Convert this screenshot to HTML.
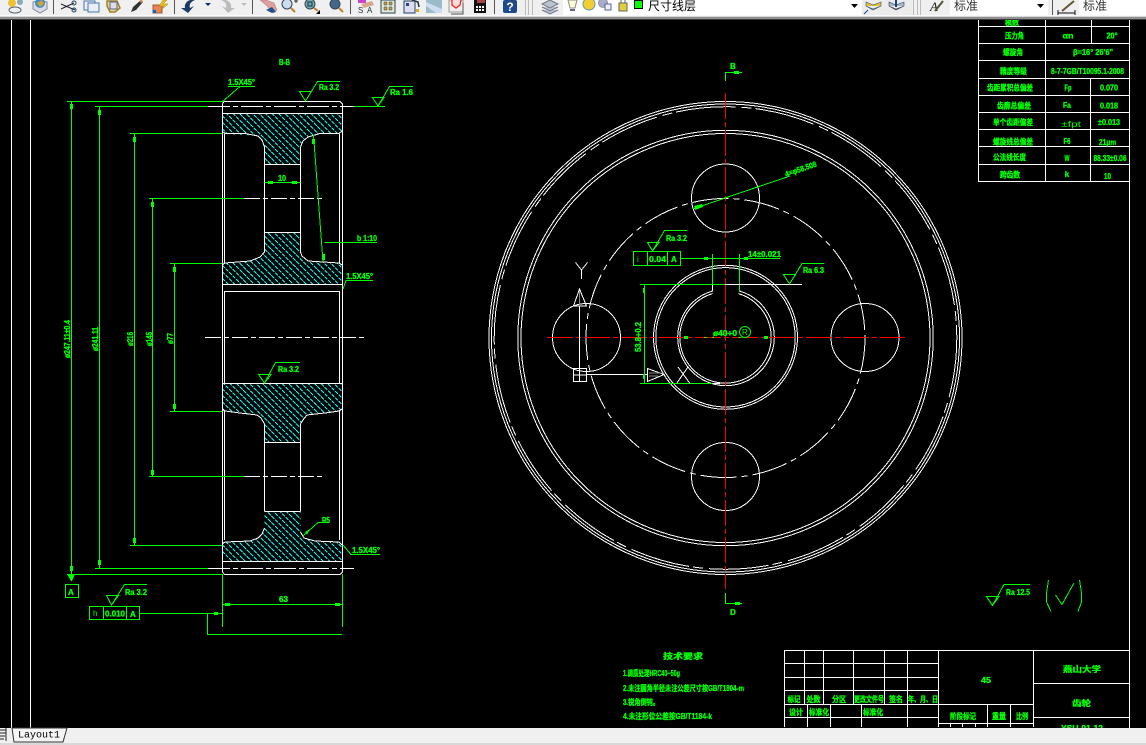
<!DOCTYPE html>
<html lang="zh"><head><meta charset="utf-8"><title>CAD</title>
<style>
html,body{margin:0;padding:0;background:#000;width:1146px;height:745px;overflow:hidden}
svg{display:block;position:absolute;left:0;top:0}
.c *{shape-rendering:crispEdges;fill:none;stroke-width:1}
.g{stroke:#0f0}.w{stroke:#fff}.r{stroke:#f00}
text{font-family:"Liberation Sans","Noto Sans CJK SC",sans-serif;fill:#0f0;font-weight:bold;font-size:8px;stroke:#0f0;stroke-width:.35}
.m{text-anchor:middle}
.f{fill:#0f0;stroke:none}
.n{stroke:none;font-weight:normal}
</style></head><body>
<svg width="1146" height="745" viewBox="0 0 1146 745" xmlns="http://www.w3.org/2000/svg">
<defs>
<clipPath id="hc">
<path d="M222 113H342V131L339 134H320L308 137L303 141L300.5 147V164H264.5V147L262 140L258 136L245 135L225 134L222 131Z"/>
<path d="M264.5 232.5H300.5V252L302 256L308 261L339 263L342 265V284H222V265L225 263L250 261L260 257L264.5 252Z"/>
<path d="M222 383.5H342V409L339 411L325 413L307 415L303 420L300.5 424V442.5H264.5V424L261 418L257 415L240 413L225 411L222 409Z"/>
<path d="M264.5 511.5H300.5V532L304 538L315 541L339 542L342 545V561H222V544L225 542L250 541L258 538L262 534L264.5 528Z"/>
</clipPath>
</defs>
<rect width="1146" height="745" fill="#000"/>

<!-- hatching -->
<g clip-path="url(#hc)">
<path fill="none" stroke="#0ff" stroke-width="1" stroke-dasharray="4 1" shape-rendering="crispEdges" d="M222 -8l120 120m-120-113.5l120 120m-120-113.5l120 120m-120-113.5l120 120m-120-113.5l120 120m-120-113.5l120 120m-120-113.5l120 120m-120-113.5l120 120m-120-113.5l120 120m-120-113.5l120 120m-120-113.5l120 120m-120-113.5l120 120m-120-113.5l120 120m-120-113.5l120 120m-120-113.5l120 120m-120-113.5l120 120m-120-113.5l120 120m-120-113.5l120 120m-120-113.5l120 120m-120-113.5l120 120m-120-113.5l120 120m-120-113.5l120 120m-120-113.5l120 120m-120-113.5l120 120m-120-113.5l120 120m-120-113.5l120 120m-120-113.5l120 120m-120-113.5l120 120m-120-113.5l120 120m-120-113.5l120 120m-120-113.5l120 120m-120-113.5l120 120m-120-113.5l120 120m-120-113.5l120 120m-120-113.5l120 120m-120-113.5l120 120m-120-113.5l120 120m-120-113.5l120 120m-120-113.5l120 120m-120-113.5l120 120m-120-113.5l120 120m-120-113.5l120 120m-120-113.5l120 120m-120-113.5l120 120m-120-113.5l120 120m-120-113.5l120 120m-120-113.5l120 120m-120-113.5l120 120m-120-113.5l120 120m-120-113.5l120 120m-120-113.5l120 120m-120-113.5l120 120m-120-113.5l120 120m-120-113.5l120 120m-120-113.5l120 120m-120-113.5l120 120m-120-113.5l120 120m-120-113.5l120 120m-120-113.5l120 120m-120-113.5l120 120m-120-113.5l120 120m-120-113.5l120 120m-120-113.5l120 120m-120-113.5l120 120m-120-113.5l120 120m-120-113.5l120 120m-120-113.5l120 120m-120-113.5l120 120m-120-113.5l120 120m-120-113.5l120 120m-120-113.5l120 120m-120-113.5l120 120m-120-113.5l120 120m-120-113.5l120 120m-120-113.5l120 120m-120-113.5l120 120m-120-113.5l120 120m-120-113.5l120 120m-120-113.5l120 120m-120-113.5l120 120m-120-113.5l120 120m-120-113.5l120 120m-120-113.5l120 120m-120-113.5l120 120m-120-113.5l120 120m-120-113.5l120 120m-120-113.5l120 120"/>
</g>

<g class="c">
<!-- frame -->
<path class="w" d="M11.5 20V728M30.5 20V728M1129.5 20V728"/>

<!-- left view white -->
<path class="w" d="M222.5 104L224 101.5H340L342.5 104V572L340 574.5H224.5L222.5 572ZM224.5 134V263M339.5 134V263M224.5 291V383M339.5 291V383M224.5 411V540M339.5 411V540"/>
<path class="w" d="M222 113.5H342M222 284.5H342M224.5 291.5H339.5M222 383.5H342M222 561.5H342"/>
<path class="w" d="M222 131L225 133.5H245L258 136L262 140L264.5 147V232.5M342 131L339 133.5H320L308 137L303 141L300.5 147V232.5M264.5 164.5H300.5M264.5 232.5H300.5"/>
<path class="w" d="M264.5 232V252L260 257L250 261L225 263L222 265M300.5 232V252L302 256L308 261L339 263L342 265"/>
<path class="w" d="M222 409L225 411L240 413L257 415L261 418L264.5 424V511.5M342 409L339 411L325 413L307 415L303 420L300.5 424V511.5M264.5 442.5H300.5M264.5 511.5H300.5"/>
<path class="w" d="M264.5 528L262 534L258 538L250 541L225 542L222 544M300.5 532L304 538L315 541L339 542L342 545"/>
<path class="w" stroke-dasharray="22 3 5 3" d="M208 106.5H354M208 568.5H354"/>
<path class="w" stroke-dasharray="16 3 5 3" d="M244 198.5H322M244 476.5H322M205 337.5H366"/>

<!-- left dims -->
<path class="g" d="M71.5 101.5V580M99.5 106.5V568M134.5 133.5V545M152.5 198.5V476M174.5 263.5V411"/>
<path class="g" d="M67 101.5H222M95 106.5H208M130 133.5H222M149 198.5H244M170 263.5H222M170 411.5H222M130 545.5H222M149 476.5H244M95 568.5H208M67 574.5H222"/>
<path class="g" d="M264.5 182.5H300.5M222.5 574V627M342.5 574V627M222 604.5H342M140 613.5H222M207.5 613V634.5H342"/>
<path class="g" d="M313.5 135L323 262M324.5 242.5H377M354 106.5H385"/>
<path class="g" d="M222 102L240 86.5H255M228 86.5H240M343 289L346 280.5H373M343 545L351 554.5H380"/>
<path class="g" d="M303 536L318 522.5H329"/>
<path class="g" d="M299.5 91.5H311.5L305.5 101L299.5 91.5ZM305.5 101L317.5 81.5H340"/>
<path class="g" d="M372.5 97.5H384L378 106L372.5 97.5ZM378 106L389.5 86.5H413"/>
<path class="g" d="M258.5 374.5H271L264.5 383L258.5 374.5ZM264.5 383L275.5 362.5H300"/>
<path class="g" d="M106.5 595.5H118.5L111.5 605L106.5 595.5ZM111.5 605L124.5 584.5H147"/>
<path class="g" d="M65.5 584.5H78.5V597.5H65.5ZM89.5 606.5H139.5V619.5H89.5ZM103.5 606V620M126.5 606V620"/>
</g>
<g class="f">
<rect x="70" y="104" width="3" height="5"/><rect x="98" y="110" width="3" height="5"/><rect x="133" y="137" width="3" height="5"/><rect x="151" y="202" width="3" height="5"/><rect x="173" y="267" width="3" height="5"/>
<rect x="70" y="566" width="3" height="5"/><rect x="98" y="560" width="3" height="5"/><rect x="133" y="538" width="3" height="5"/><rect x="151" y="470" width="3" height="5"/><rect x="173" y="404" width="3" height="5"/>
<rect x="268" y="181" width="5" height="3"/><rect x="292" y="181" width="5" height="3"/>
<rect x="312" y="139" width="3" height="5"/><rect x="322" y="254" width="3" height="6"/>
<rect x="225" y="603" width="5" height="3"/><rect x="335" y="603" width="5" height="3"/><rect x="214" y="612" width="4" height="3"/>
<path d="M67 574H75L72 581H71ZM305 532L310 529L307 535Z"/>
</g>

<!-- left text -->
<text x="228" y="85" font-size="9" textLength="27" lengthAdjust="spacingAndGlyphs">1.5X45°</text>
<text x="279" y="65" textLength="11" lengthAdjust="spacingAndGlyphs">B-B</text>
<text x="319" y="90" font-size="9" textLength="20" lengthAdjust="spacingAndGlyphs">Ra 3.2</text>
<text x="390" y="95" font-size="9" textLength="23" lengthAdjust="spacingAndGlyphs">Ra 1.6</text>
<text x="278" y="181" font-size="9" textLength="8" lengthAdjust="spacingAndGlyphs">10</text>
<text x="357" y="241" font-size="9" textLength="20" lengthAdjust="spacingAndGlyphs">b 1:10</text>
<text x="346" y="279" font-size="9" textLength="27" lengthAdjust="spacingAndGlyphs">1.5X45°</text>
<text x="278" y="372" font-size="9" textLength="21" lengthAdjust="spacingAndGlyphs">Ra 3.2</text>
<text x="322" y="523" font-size="9" textLength="8" lengthAdjust="spacingAndGlyphs">R5</text>
<text x="352" y="553" font-size="9" textLength="28" lengthAdjust="spacingAndGlyphs">1.5X45°</text>
<text x="125" y="595" font-size="9" textLength="22" lengthAdjust="spacingAndGlyphs">Ra 3.2</text>
<text x="279" y="602" font-size="9" textLength="9" lengthAdjust="spacingAndGlyphs">63</text>
<text x="68" y="595" font-size="9">A</text>
<text x="93" y="616" class="n">h</text>
<text x="105" y="616.5" font-size="9" textLength="20" lengthAdjust="spacingAndGlyphs">0.010</text>
<text x="130" y="617" font-size="9">A</text>
<text transform="translate(70 358) rotate(-90)" font-size="9" textLength="38" lengthAdjust="spacingAndGlyphs">ø247.11±0.4</text>
<text transform="translate(98 351) rotate(-90)" font-size="9" textLength="24" lengthAdjust="spacingAndGlyphs">ø241.11</text>
<text transform="translate(133 346) rotate(-90)" font-size="9" textLength="14" lengthAdjust="spacingAndGlyphs">ø216</text>
<text transform="translate(152 346) rotate(-90)" font-size="9" textLength="14" lengthAdjust="spacingAndGlyphs">ø145</text>
<text transform="translate(173 344) rotate(-90)" font-size="9" textLength="11" lengthAdjust="spacingAndGlyphs">ø77</text>

<!-- right view -->
<g class="c">
<circle class="w" cx="725.5" cy="338" r="236.5"/>
<circle class="w" cx="725.5" cy="338" r="234"/>
<circle class="w" cx="725.5" cy="338" r="231.3" stroke-dasharray="60 6 10 4"/>
<circle class="w" cx="725.5" cy="338" r="207.7"/>
<circle class="w" cx="725.5" cy="338" r="204.5"/>
<circle class="w" cx="725.5" cy="338" r="139.5" stroke-dasharray="36 5 6 5"/>
<circle class="w" cx="725.5" cy="198" r="34"/>
<circle class="w" cx="725.5" cy="476.5" r="34"/>
<circle class="w" cx="586.5" cy="337.5" r="34"/>
<circle class="w" cx="865" cy="337.5" r="34"/>
<circle class="w" cx="725.5" cy="337.3" r="72"/>
<circle class="w" cx="725.5" cy="337.3" r="69.7"/>
<path class="w" d="M712.5 284V291A48.3 48.3 0 1 0 739.5 291V284"/>
<path class="w" d="M712.5 293.6A45.7 45.7 0 1 0 738.5 293.6"/>
<path class="r" stroke-dasharray="26 3 5 3" d="M725.5 93V589"/>
<path class="r" stroke-dasharray="26 3 5 3" d="M547 337.5H905"/>
<!-- section marks -->
<path class="g" d="M725.5 81V72.5H742M725.5 593V603.5H742"/>
<!-- dia -->
<path class="g" d="M694 208.5L790 176"/>
<path class="g" d="M633.5 251.5H680.5V265.5H633.5ZM647.5 251V266M667.5 251V266M680.5 258.5H780M712.5 254V284M739.5 254V292"/>
<path class="g" d="M647.5 242.5H659L652.5 251L647.5 242.5ZM652.5 251L664.5 230.5H687"/>
<path class="w" d="M725 284.5H802"/>
<path class="g" d="M640 284.5H725M644.5 284V383M640 383.5H712"/>
<path class="w" d="M712 383.5H720"/>
<path class="g" d="M783.5 274.5H795.5L789.5 284L783.5 274.5ZM789.5 284L802 263.5H824"/>
<!-- section symbol -->
<path class="w" d="M573.5 368.5H586.5V381.5H573.5ZM579.5 306V382M573 375H587M586.5 374.5H647M573.5 306H586.5L579.5 289ZM647.5 368.5V381.5L664 374.5Z"/>
<path class="w" d="M575.5 262.5L581.5 270L587.5 262.5M581.5 270V279M688 367L676.5 383.5M678 367L690 383.5"/>
<path d="M579.5 291V305M649 373H663M649 376H658" style="stroke:#888"/>
<!-- marks -->
<path class="g" d="M986.5 596.5H999L992.5 605.5L986.5 596.5ZM992.5 605.5L1004 584.5H1030"/>
<path class="g" d="M1048.5 580L1046.5 593V602L1051 611.5M1079.5 580L1081.5 593V602L1078 611.5M1055.5 595L1062 604.5L1074 583"/>

<!-- table top right -->
<path class="w" d="M978.5 20V181.5H1129.5M978.5 26.5H1129.5M978.5 43.5H1129.5M978.5 60.5H1129.5M978.5 78.5H1129.5M978.5 95.5H1129.5M978.5 112.5H1129.5M978.5 129.5H1129.5M978.5 146.5H1129.5M978.5 164.5H1129.5"/>
<path class="w" d="M1045.5 20V181.5M1091.5 20V43M1090.5 78V181.5"/>

<!-- title block -->
<path class="w" d="M784.5 650.5H1129.5M784.5 663.5H938.5M784.5 677.5H938.5M784.5 690.5H938.5M784.5 704.5H1033.5M784.5 717.5H938.5M938.5 723.5H1033.5M1033.5 683.5H1129.5M1033.5 717.5H1129.5"/>
<path class="w" d="M784.5 650V727M804.5 650V704M823.5 650V704M853.5 650V704M884.5 650V704M907.5 650V727M938.5 650V727M1033.5 650V727M807.5 704V727M830.5 704V727M861.5 704V727M987.5 704V727M1010.5 704V727M950.5 723V727M962.5 723V727M975.5 723V727"/>
</g>
<g class="f">
<rect x="734" y="71" width="5" height="3"/><rect x="735" y="602" width="5" height="3"/>
<rect x="704" y="257" width="4" height="3"/><rect x="744" y="257" width="4" height="3"/>
<rect x="643" y="288" width="2" height="5"/><rect x="643" y="374" width="2" height="5"/>
<rect x="684" y="336" width="4" height="3"/><rect x="764" y="336" width="4" height="3"/>
<rect x="704" y="337" width="3" height="1"/><rect x="712" y="337" width="2" height="1"/><rect x="738" y="337" width="3" height="1"/>
<path d="M694 206L702 204L703 207L695 210Z"/>
</g>
<text x="730" y="69" font-size="9">B</text>
<text x="730" y="615" font-size="9">D</text>
<text transform="translate(786 177) rotate(-19)" font-size="9" textLength="33" lengthAdjust="spacingAndGlyphs">4×φ58.508</text>
<text x="666" y="241" font-size="9" textLength="21" lengthAdjust="spacingAndGlyphs">Ra 3.2</text>
<text x="637" y="262" class="n">i</text>
<text x="649" y="262" font-size="9" textLength="17" lengthAdjust="spacingAndGlyphs">0.04</text>
<text x="671" y="262">A</text>
<text x="748" y="257" font-size="9" textLength="33" lengthAdjust="spacingAndGlyphs">14±0.021</text>
<text x="803" y="273" font-size="9" textLength="21" lengthAdjust="spacingAndGlyphs">Ra 6.3</text>
<text x="713" y="336" font-size="9" textLength="24" lengthAdjust="spacingAndGlyphs">ø40+0</text>
<circle cx="745" cy="332" r="5.5" fill="none" stroke="#0f0"/>
<text x="742" y="335" font-size="7" class="n">R</text>
<text transform="translate(641 352) rotate(-90)" font-size="9" textLength="30" lengthAdjust="spacingAndGlyphs">53.8+0.2</text>
<text x="1006" y="595" font-size="10" textLength="24" lengthAdjust="spacingAndGlyphs">Ra 12.5</text>

<!-- tech text -->
<text x="663" y="659" font-size="13" textLength="40" lengthAdjust="spacingAndGlyphs">技术要求</text>
<text x="623" y="676" font-size="9" textLength="57" lengthAdjust="spacingAndGlyphs">1.调质处理HRC40~50g</text>
<text x="623" y="691" font-size="9" textLength="121" lengthAdjust="spacingAndGlyphs">2.未注圆角半径未注公差尺寸按GB/T1804-m</text>
<text x="623" y="705" font-size="9" textLength="36" lengthAdjust="spacingAndGlyphs">3.锐角倒钝。</text>
<text x="623" y="719" font-size="9" textLength="89" lengthAdjust="spacingAndGlyphs">4.未注形位公差按GB/T1184-k</text>

<!-- title text -->
<g font-size="10">
<text x="794" y="702" class="m" textLength="13" lengthAdjust="spacingAndGlyphs">标记</text>
<text x="813.5" y="702" class="m" textLength="14" lengthAdjust="spacingAndGlyphs">处数</text>
<text x="839" y="702" class="m" textLength="14" lengthAdjust="spacingAndGlyphs">分区</text>
<text x="869" y="702" class="m" textLength="30" lengthAdjust="spacingAndGlyphs">更改文件号</text>
<text x="896" y="702" class="m" textLength="14" lengthAdjust="spacingAndGlyphs">签名</text>
<text x="923" y="702" class="m" textLength="30" lengthAdjust="spacingAndGlyphs">年、月、日</text>
<text x="796" y="715" class="m" textLength="14" lengthAdjust="spacingAndGlyphs">设计</text>
<text x="819" y="715" class="m" textLength="20" lengthAdjust="spacingAndGlyphs">标准化</text>
<text x="873" y="715" class="m" textLength="20" lengthAdjust="spacingAndGlyphs">标准化</text>
<text x="963" y="719" class="m" textLength="26" lengthAdjust="spacingAndGlyphs">阶段标记</text>
<text x="999" y="719" class="m" textLength="14" lengthAdjust="spacingAndGlyphs">重量</text>
<text x="1022" y="719" class="m" textLength="12" lengthAdjust="spacingAndGlyphs">比例</text>
</g>
<text x="986" y="683" class="m" font-size="13" textLength="10" lengthAdjust="spacingAndGlyphs">45</text>
<text x="1082" y="672" class="m" font-size="13" textLength="38" lengthAdjust="spacingAndGlyphs">燕山大学</text>
<text x="1081.5" y="706" class="m" font-size="13" textLength="19" lengthAdjust="spacingAndGlyphs">齿轮</text>
<text x="1082" y="731" class="m" font-size="8" textLength="42" lengthAdjust="spacingAndGlyphs">YSU-01-12</text>

<!-- table text -->
<g font-size="9">
<text x="1012" y="25" class="m" textLength="14" lengthAdjust="spacingAndGlyphs">模数</text>
<text x="1014.5" y="38.5" class="m" textLength="19" lengthAdjust="spacingAndGlyphs">压力角</text>
<text x="1068" y="38.5" class="m" textLength="11" lengthAdjust="spacingAndGlyphs">αn</text>
<text x="1112" y="38.5" class="m" textLength="11" lengthAdjust="spacingAndGlyphs">20°</text>
<text x="1013" y="55" class="m" textLength="20" lengthAdjust="spacingAndGlyphs">螺旋角</text>
<text x="1093" y="55" class="m" textLength="40" lengthAdjust="spacingAndGlyphs">β=16° 26'6"</text>
<text x="1013.5" y="74" class="m" textLength="27" lengthAdjust="spacingAndGlyphs">精度等级</text>
<text x="1087.5" y="74" class="m" textLength="73" lengthAdjust="spacingAndGlyphs">8-7-7GB/T10095.1-2008</text>
<text x="1010" y="90.5" class="m" textLength="46" lengthAdjust="spacingAndGlyphs">齿距累积总偏差</text>
<text x="1068" y="90.5" class="m" textLength="7" lengthAdjust="spacingAndGlyphs">Fp</text>
<text x="1109" y="90.5" class="m" textLength="18" lengthAdjust="spacingAndGlyphs">0.070</text>
<text x="1014" y="108.5" class="m" textLength="34" lengthAdjust="spacingAndGlyphs">齿廓总偏差</text>
<text x="1067" y="108" class="m" textLength="8" lengthAdjust="spacingAndGlyphs">Fa</text>
<text x="1109" y="108.5" class="m" textLength="18" lengthAdjust="spacingAndGlyphs">0.018</text>
<text x="1013" y="125" class="m" textLength="40" lengthAdjust="spacingAndGlyphs">单个齿距偏差</text>
<text x="1071" y="127" class="m n" font-size="13" textLength="20" lengthAdjust="spacingAndGlyphs">±fpt</text>
<text x="1109" y="125" class="m" textLength="22" lengthAdjust="spacingAndGlyphs">±0.013</text>
<text x="1013" y="144.5" class="m" textLength="40" lengthAdjust="spacingAndGlyphs">螺旋线总偏差</text>
<text x="1067" y="144" class="m" textLength="7" lengthAdjust="spacingAndGlyphs">F6</text>
<text x="1107.5" y="145" class="m" textLength="17" lengthAdjust="spacingAndGlyphs">21μm</text>
<text x="1009.5" y="160" class="m" textLength="33" lengthAdjust="spacingAndGlyphs">公法线长度</text>
<text x="1067" y="161" class="m" textLength="5" lengthAdjust="spacingAndGlyphs">W</text>
<text x="1110" y="161" class="m" textLength="33" lengthAdjust="spacingAndGlyphs">88.33±0.06</text>
<text x="1010" y="177.5" class="m" textLength="20" lengthAdjust="spacingAndGlyphs">跨齿数</text>
<text x="1067" y="177" class="m">k</text>
<text x="1107.5" y="179" class="m" textLength="7" lengthAdjust="spacingAndGlyphs">10</text>
</g>

<!-- toolbar -->
<rect x="0" y="0" width="1146" height="16" fill="#f0f0f0"/>
<rect x="0" y="15" width="1146" height="1" fill="#fafafa"/>
<rect x="0" y="16" width="1146" height="1" fill="#d8d8d8"/>
<rect x="0" y="17" width="1146" height="2" fill="#909090"/>
<rect x="0" y="19" width="1146" height="1" fill="#3a3a3a"/>
<rect x="0" y="728" width="1146" height="17" fill="#f0f0f0"/>
<rect x="0" y="743" width="1146" height="2" fill="#d8d8d8"/>

<!-- status tab -->
<path d="M12 728L14 742H63L67 728Z" fill="#f5f5f5" stroke="#333" stroke-width="1"/>
<path d="M0 730H6M0 733H6M0 736H5M0 739H4" stroke="#222"/>
<path d="M6 728V741" stroke="#222"/>
<text x="18" y="737.5" class="n" style="font-family:'Liberation Mono',monospace;fill:#000;font-size:10px">Layout1</text>

<!-- separators -->
<path d="M53.5 0V14M174.5 0V14M252.5 0V14M350.5 0V14M494.5 0V14M1052.5 0V15" stroke="#555"/>
<path d="M525.5 0V15M528.5 0V15M532.5 0V15M913.5 0V15M917.5 0V15M920.5 0V15" stroke="#bbb"/>

<!-- combo backgrounds -->
<rect x="563" y="0" width="299" height="15" fill="#fff"/>
<rect x="950" y="0" width="98" height="15" fill="#fff"/>
<rect x="1079" y="0" width="67" height="15" fill="#fff"/>
<rect x="862" y="0" width="50" height="15" fill="#ececec"/>

<!-- icons -->
<circle cx="12" cy="3" r="4" fill="#f0c030"/><ellipse cx="15" cy="10" rx="6" ry="3" fill="none" stroke="#567"/><circle cx="20" cy="2" r="3" fill="#8ab"/>
<path d="M33 2L40 0L47 2V9L40 13L33 9Z" fill="#d8dde8" stroke="#889"/><circle cx="40" cy="3" r="5" fill="#3a8fc8"/><path d="M37 3L42 0L44 4L40 7Z" fill="#d8a030"/>
<path d="M61 4L75 10M61 9L74 3" stroke="#223" stroke-width="1"/><circle cx="74" cy="3" r="2" fill="none" stroke="#246"/><circle cx="74" cy="10" r="2" fill="none" stroke="#246"/>
<rect x="84" y="1" width="11" height="9" fill="#eef" stroke="#4878a8"/><rect x="88" y="3" width="11" height="9" fill="#e8eff8" stroke="#4878a8"/>
<path d="M107 1H117L120 8L115 12H110L107 6Z" fill="#e8d8a0" stroke="#a08030" stroke-width="1.5"/><rect x="110" y="2" width="7" height="7" fill="#dde" stroke="#567"/>
<path d="M131 12L133 7L141 0L143 2L136 10Z" fill="#333"/><path d="M139 1L142 0L143 2L141 3Z" fill="#c84"/>
<rect x="153" y="5" width="9" height="8" fill="#f08050" stroke="#906040"/><rect x="153" y="10" width="3" height="3" fill="#06c"/><path d="M163 0L159 6H164L160 11L168 4H163L167 0Z" fill="#f0c020" stroke="#a08010" stroke-width=".5"/>
<path d="M195 0C190 2 189 5 190 8L194 6L188 13L181 8L185 8C184 4 187 1 190 0Z" fill="#1a3a6a"/>
<path d="M205 3H211L208 6Z" fill="#003080"/>
<path d="M221 0C226 2 227 5 226 8L222 6L228 13L235 8L231 8C232 4 229 1 226 0Z" fill="#bbb"/>
<path d="M241 3H247L244 6Z" fill="#bbb"/>
<path d="M260 0L267 6L272 12L277 10L274 3L266 0Z" fill="#e0a0a0" stroke="#a07070" stroke-width=".5"/><path d="M266 10L272 7L276 12L272 13Z" fill="#24508c"/>
<circle cx="287" cy="4" r="5" fill="#cde" stroke="#345"/><path d="M291 8L295 12" stroke="#c08030" stroke-width="2"/><path d="M294 1H298M296 0V3" stroke="#333"/>
<circle cx="310" cy="4" r="5" fill="#7aa" stroke="#345"/><rect x="308" y="2" width="4" height="4" fill="none" stroke="#135"/><path d="M314 8L318 11" stroke="#c08030" stroke-width="2"/><path d="M320 10V14H316Z" fill="#000"/>
<circle cx="335" cy="4" r="5" fill="#468" stroke="#345"/><path d="M339 8L343 12" stroke="#c08030" stroke-width="2"/>
<rect x="358" y="0" width="8" height="3" fill="#c4c"/><path d="M361 4L372 1L374 5L364 8Z" fill="#d8a888"/><text x="358" y="13" class="n" style="fill:#234;font-size:8px">S</text><text x="367" y="13" class="n" style="fill:#234;font-size:8px">A</text>
<rect x="381" y="0" width="14" height="13" fill="#e8e8d8" stroke="#245"/><path d="M384 2h3v3h-3zM389 2h3v3h-3zM384 7h3v3h-3zM389 7h3v3h-3z" fill="#c8a030" stroke="#246" stroke-width=".5"/>
<rect x="404" y="1" width="11" height="12" fill="#dde" stroke="#246"/><path d="M412 0L418 2L419 7" stroke="#234" fill="none" stroke-width="1.5"/><rect x="416" y="9" width="3" height="3" fill="#da2"/><rect x="406" y="3" width="3" height="3" fill="#248"/>
<rect x="426" y="0" width="16" height="13" fill="#9bc"/><path d="M426 2L442 9V13H436L426 6Z" fill="#cde"/>
<rect x="449" y="0" width="14" height="12" fill="#eee" stroke="#999"/><path d="M452 0V5L456 8L460 5L461 0" fill="#fdd" stroke="#e22" stroke-width="1.3"/><path d="M463 3V14H451" stroke="#555" fill="none"/>
<rect x="474" y="0" width="12" height="13" fill="#111"/><path d="M476 6h2v2h-2zM479 6h2v2h-2zM482 6h2v2h-2zM476 9h2v2h-2zM479 9h2v2h-2zM482 9h2v2h-2z" fill="#fff"/><rect x="477" y="0" width="8" height="3" fill="#a44"/>
<rect x="503" y="0" width="14" height="13" rx="2" fill="#1e4a8c"/><text x="510" y="11" class="m n" style="fill:#fff;font-size:12px;font-weight:bold">?</text>
<path d="M542 4L550 0L558 4L550 8ZM542 7L550 11L558 7M542 10L550 14L558 10" fill="#bbc5d0" stroke="#778"/>
<!-- layer icons -->
<path d="M568 0H577L575 8H570Z" fill="#fffbd0" stroke="#889"/><rect x="570" y="9" width="5" height="2" fill="#668"/>
<circle cx="589" cy="4" r="6" fill="#f0d030" stroke="#69a"/>
<circle cx="603" cy="3" r="4.5" fill="#aac" stroke="#89a"/><rect x="605" y="4" width="6" height="6" fill="#eef" stroke="#568"/>
<rect x="619" y="3" width="8" height="8" fill="#e0d040" stroke="#665"/><path d="M621 3V0M625 3V0" stroke="#665"/>
<rect x="634.5" y="0.5" width="8" height="8" fill="#0f0" stroke="#000"/>
<text x="648" y="10" class="n" style="fill:#000;font-size:12px">尺寸线层</text>
<path d="M851 4H858L854.5 8Z" fill="#000"/>
<path d="M866 2L873 5L881 2V6L873 9L866 6ZM866 6L873 10L881 6" fill="#e8c030" stroke="#357" stroke-width=".6"/><path d="M864 14L868 10" stroke="#248"/>
<path d="M889 2L896 5L904 2V6L896 9L889 6ZM889 6L896 10L904 6" fill="#a8b8c8" stroke="#345" stroke-width=".6"/><path d="M896 0V7" stroke="#148" stroke-width="2"/>
<text x="930" y="11" class="n" style="font-family:'Liberation Serif',serif;font-style:italic;font-size:13px;fill:#222">A</text><path d="M935 11L943 1" stroke="#553" stroke-width="2"/>
<text x="954" y="10" class="n" style="fill:#333;font-size:12px">标准</text>
<path d="M1037 4H1044L1040.5 8Z" fill="#000"/>
<path d="M1058 13H1075M1058 10V15M1075 10V15" stroke="#111"/><path d="M1062 11L1074 1" stroke="#653" stroke-width="2"/>
<text x="1083" y="10" class="n" style="fill:#333;font-size:12px">标准</text>
</svg>
</body></html>
